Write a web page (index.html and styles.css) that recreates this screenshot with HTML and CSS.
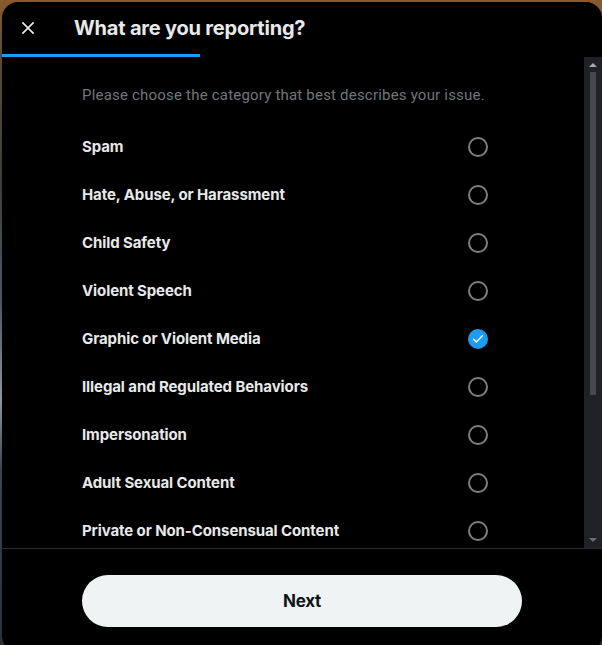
FILE: index.html
```html
<!DOCTYPE html>
<html>
<head>
<meta charset="utf-8">
<link rel="stylesheet" href="styles.css">
</head>
<body>
<div class="dialog">
  <header class="header">
    <button class="close" aria-label="Close">
      <svg viewBox="0 0 24 24" width="20" height="20"><path d="M10.59 12L4.54 5.96l1.42-1.42L12 10.59l6.04-6.05 1.42 1.42L13.41 12l6.05 6.04-1.42 1.42L12 13.41l-6.04 6.05-1.42-1.42L10.59 12z" fill="#e7e9ea"/></svg>
    </button>
    <h1 class="title">What are you reporting?</h1>
  </header>
  <div class="progress"><div class="progress-fill"></div></div>
  <div class="body">
    <div class="scroll">
      <p class="subtitle">Please choose the category that best describes your issue.</p>
      <ul class="options">
        <li class="option"><span>Spam</span><span class="radio"></span></li>
        <li class="option"><span>Hate, Abuse, or Harassment</span><span class="radio"></span></li>
        <li class="option"><span>Child Safety</span><span class="radio"></span></li>
        <li class="option"><span>Violent Speech</span><span class="radio"></span></li>
        <li class="option"><span>Graphic or Violent Media</span><span class="radio checked"><svg viewBox="0 0 24 24" width="14" height="14"><path d="M4.5 12.5l4.5 4.5L19.5 6.5" fill="none" stroke="#fff" stroke-width="2.4" stroke-linecap="round" stroke-linejoin="round"/></svg></span></li>
        <li class="option"><span>Illegal and Regulated Behaviors</span><span class="radio"></span></li>
        <li class="option"><span>Impersonation</span><span class="radio"></span></li>
        <li class="option"><span>Adult Sexual Content</span><span class="radio"></span></li>
        <li class="option"><span>Private or Non-Consensual Content</span><span class="radio"></span></li>
      </ul>
    </div>
    <div class="scrollbar">
      <span class="arrow up"></span>
      <div class="track"><div class="thumb"></div></div>
      <span class="arrow down"></span>
    </div>
  </div>
  <footer class="footer">
    <button class="next">Next</button>
  </footer>
</div>
</body>
</html>
```
FILE: styles.css
```css
* { box-sizing: border-box; }
html, body { margin: 0; height: 100%; }
body {
  overflow: hidden;
  background: linear-gradient(180deg, #8a5a2c 0px, #5a4a30 60px, #3a3f3a 180px, #4a5660 300px, #8a96a2 400px, #3a4550 470px, #2a3038 645px);
  font-family: Inter, Roboto, sans-serif;
}
.dialog {
  margin: 2px 0 0 2px;
  width: 600px;
  height: 650px;
  background: #000;
  border-radius: 16px;
  display: flex;
  flex-direction: column;
  overflow: hidden;
}
.header {
  height: 52px;
  display: flex;
  align-items: center;
  padding-left: 16px;
}
.close {
  width: 20px;
  height: 20px;
  padding: 0;
  border: 0;
  background: none;
  display: flex;
  margin-right: 36px;
}
.title {
  margin: 0;
  font-size: 20px;
  font-weight: 700;
  color: #e7e9ea;
  letter-spacing: -0.2px;
}
.progress { height: 3px; }
.progress-fill { width: 198px; height: 3px; background: #1d9bf0; }
.body {
  display: flex;
  height: 492px;
  border-bottom: 1px solid #2a2d30;
}
.scroll {
  flex: 1;
  overflow: hidden;
  padding: 0 96px 0 80px;
}
.subtitle {
  margin: 0;
  padding: 28px 0 18px;
  line-height: 20px;
  font-family: Roboto, sans-serif;
  font-size: 15px;
  letter-spacing: 0.2px;
  color: #71767b;
}
.options { list-style: none; margin: 0; padding: 0; }
.option {
  height: 48px;
  display: flex;
  align-items: center;
  justify-content: space-between;
  padding-bottom: 1px;
  font-size: 15px;
  font-weight: 700;
  letter-spacing: -0.1px;
  color: #e7e9ea;
}
.radio {
  width: 20px;
  height: 20px;
  border-radius: 50%;
  border: 2px solid #7b7f83;
  display: flex;
  align-items: center;
  justify-content: center;
}
.radio.checked { background: #1d9bf0; border-color: #1d9bf0; }
.scrollbar {
  width: 18px;
  background: #1f2124;
  display: flex;
  flex-direction: column;
  align-items: center;
}
.arrow {
  width: 0; height: 0;
  margin: 6px 0 5px;
  border-left: 4px solid transparent;
  border-right: 4px solid transparent;
}
.arrow.up { border-bottom: 4px solid #a8abae; }
.arrow.down { border-top: 4px solid #6a6d70; margin: 5px 0 6px; }
.track { flex: 1; width: 6px; }
.thumb { height: 323px; width: 6px; background: #45484c; border-radius: 1px; }
.footer {
  display: flex;
  justify-content: center;
  padding-top: 26px;
}
.next {
  width: 440px;
  height: 52px;
  border: 0;
  border-radius: 26px;
  background: #eff3f4;
  color: #0f1419;
  font-family: inherit;
  font-size: 17px;
  font-weight: 700;
  letter-spacing: -0.3px;
}
```
